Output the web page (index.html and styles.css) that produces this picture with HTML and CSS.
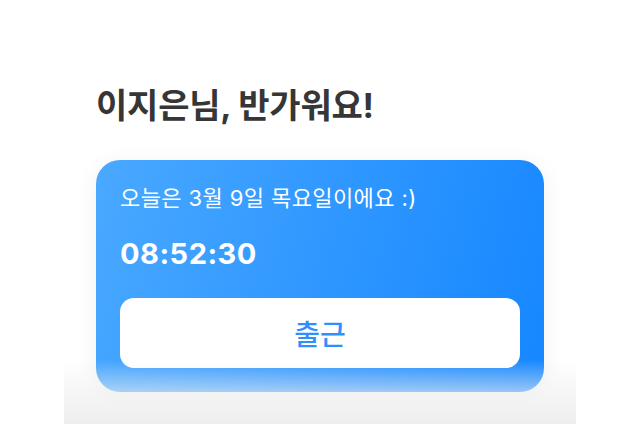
FILE: index.html
```html
<!DOCTYPE html>
<html lang="ko">

<head>
    <meta charset="UTF-8">
    <meta name="viewport" content="width=device-width, initial-scale=1.0">
    <title>출퇴근</title>
    <link rel="stylesheet" href="styles.css">
</head>

<body>

    <div id="screen">
        <h1 id="greeting">이지은님, 반가워요!</h1>
        <div id="today-card">
            <p id="today-date">오늘은 3월 9일 목요일이에요 :)</p>
            <p id="clock">08:52:30</p>
            <button id="check-in" class="card-button">출근</button>
        </div>
        <div id="bottom-fade"></div>
    </div>

</body>

</html>
```

FILE: styles.css
```css
body {
    margin: 0;
    padding: 0;
    background-color: #ffffff;
    font-family: 'Inter', 'Noto Sans CJK KR', sans-serif;
}

#screen {
    position: relative;
    width: 512px;
    height: 424px;
    margin: 0 auto;
    padding: 0 32px;
    box-sizing: border-box;
    overflow: hidden;
    background-color: #ffffff;
}

#greeting {
    margin: 0;
    padding-top: 84px;
    font-size: 34px;
    line-height: 44px;
    font-weight: 700;
    color: #363636;
    letter-spacing: -0.2px;
}

#today-card {
    margin-top: 32px;
    padding: 24px;
    border-radius: 24px;
    background: linear-gradient(105deg, #4aa9ff 0%, #2f97ff 50%, #1687ff 100%);
    box-shadow: 0 4px 24px rgba(0, 0, 0, 0.06);
}

#today-date {
    margin: 0;
    font-size: 22px;
    line-height: 28px;
    font-weight: 400;
    color: #ffffff;
    letter-spacing: 0.4px;
}

#clock {
    margin: 24px 0 0;
    font-size: 29px;
    line-height: 36px;
    font-weight: 700;
    color: #ffffff;
    letter-spacing: 0.5px;
}

.card-button {
    display: block;
    width: 100%;
    height: 70px;
    margin-top: 26px;
    border: none;
    border-radius: 14px;
    background-color: #ffffff;
    color: #2f8fff;
    font-family: inherit;
    font-size: 28px;
    font-weight: 500;
    cursor: pointer;
}

#bottom-fade {
    position: absolute;
    left: 0;
    right: 0;
    bottom: 0;
    height: 64px;
    background: linear-gradient(to bottom, rgba(240, 240, 240, 0), rgba(240, 240, 240, 0.6) 50%, #eeeeee 100%);
}
```
